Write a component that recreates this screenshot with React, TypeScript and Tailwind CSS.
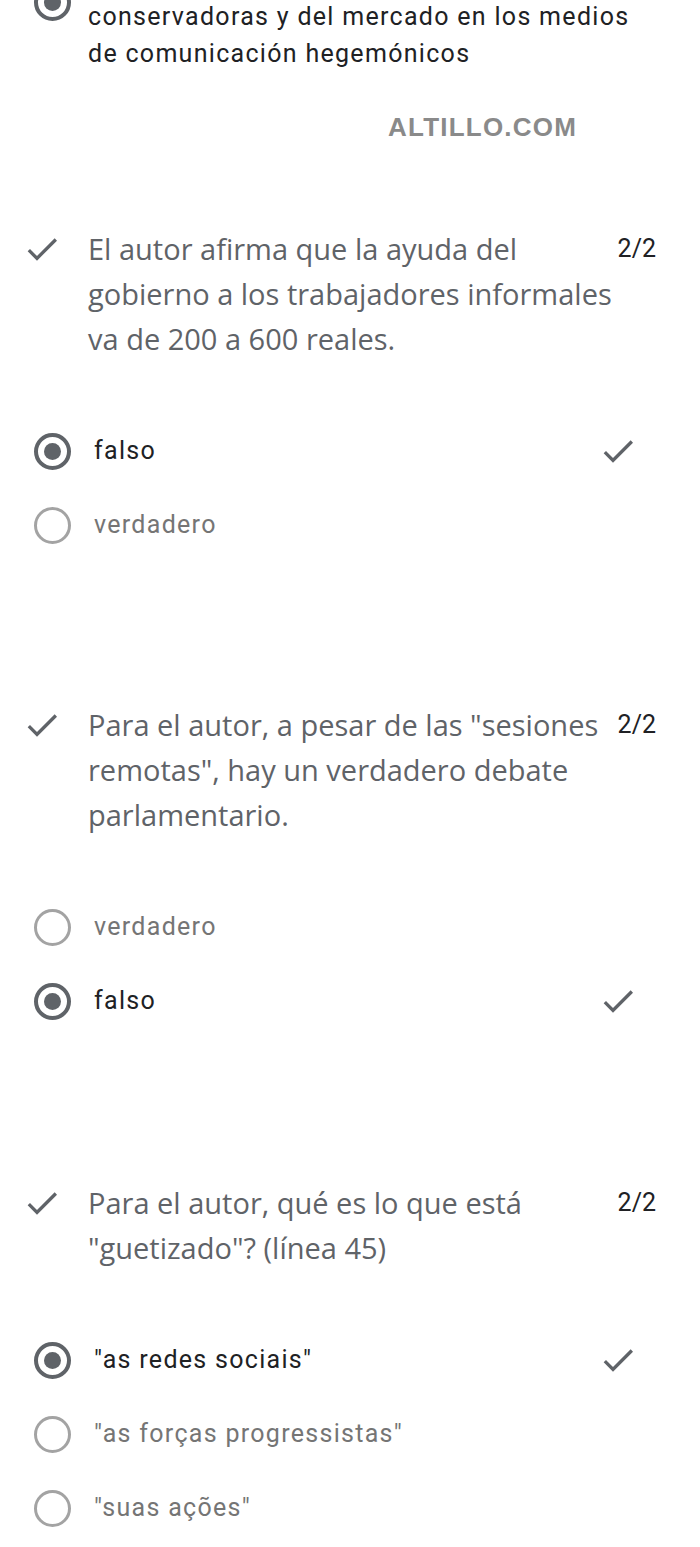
import React from 'react'

const titleFont = { fontFamily: '"Open Sans", "Noto Sans", sans-serif' }
const bodyFont = { fontFamily: 'Roboto, "Liberation Sans", sans-serif' }

// Material "done" check
function Check({ className = '' }: { className?: string }) {
  return (
    <svg viewBox="0 0 24 24" className={className} fill="currentColor">
      <path d="M9 16.2 4.8 12l-1.4 1.4L9 19 21 7l-1.4-1.4L9 16.2z" />
    </svg>
  )
}

function Radio({ checked }: { checked: boolean }) {
  return checked ? (
    <div className="w-[37px] h-[37px] rounded-full border-[4px] border-[#5f6368] flex items-center justify-center shrink-0">
      <div className="w-[17px] h-[17px] rounded-full bg-[#5f6368]" />
    </div>
  ) : (
    <div className="w-[37px] h-[37px] rounded-full border-[3px] border-[#a3a3a3] shrink-0" />
  )
}

type Opt = { label: string; checked?: boolean }

function Option({ label, checked = false }: Opt) {
  return (
    <div className="h-[74px] flex items-center pl-[34px] pr-[62px]">
      <Radio checked={checked} />
      <span
        style={bodyFont}
        className={`ml-[23px] flex-1 text-[25px] tracking-[1.3px] ${checked ? 'text-[#202124]' : 'text-[#757575]'}`}
      >
        {label}
      </span>
      {checked && <Check className="w-[40px] h-[40px] text-[#5f6368]" />}
    </div>
  )
}

function Question({ lines, options, className = '' }: { lines: string[]; options: Opt[]; className?: string }) {
  return (
    <section className={className}>
      <div className="flex pl-[22px] pr-[44px]">
        <Check className="w-[40px] h-[40px] text-[#5f6368] mt-[3px] shrink-0" />
        <div style={titleFont} className="ml-[26px] flex-1 text-[29px] leading-[45px] text-[#5f6368]">
          {lines.map((l, i) => (
            <div key={i} className="whitespace-nowrap">{l}</div>
          ))}
        </div>
        <div style={bodyFont} className="text-[25px] leading-[45px] text-[#202124]">2/2</div>
      </div>
      <div className="mt-[53px]">
        {options.map((o, i) => (
          <Option key={i} {...o} />
        ))}
      </div>
    </section>
  )
}

export default function App() {
  return (
    <div className="w-[700px] h-[1547px] bg-white overflow-hidden relative">
      {/* cut-off previous answer */}
      <div className="flex pl-[34px] -mt-[39px]">
        <div className="mt-[23px]">
          <Radio checked />
        </div>
        <div style={bodyFont} className="ml-[17px] text-[25px] leading-[37px] tracking-[1.3px] text-[#202124]">
          <div className="invisible">x</div>
          <div>conservadoras y del mercado en los medios</div>
          <div>de comunicación hegemónicos</div>
        </div>
      </div>

      <div className="flex justify-end pr-[123px] mt-[36px]">
        <span
          style={{ fontFamily: '"Liberation Sans", Arial, sans-serif' }}
          className="text-[26px] font-bold tracking-[1.2px] text-[#8a8a8a]"
        >
          ALTILLO.COM
        </span>
      </div>

      <div className="mt-[79px] flex flex-col">
        <Question
          lines={[
            'El autor afirma que la ayuda del',
            'gobierno a los trabajadores informales',
            'va de 200 a 600 reales.',
          ]}
          options={[{ label: 'falso', checked: true }, { label: 'verdadero' }]}
        />
        <Question
          className="mt-[140px]"
          lines={['Para el autor, a pesar de las "sesiones', 'remotas", hay un verdadero debate', 'parlamentario.']}
          options={[{ label: 'verdadero' }, { label: 'falso', checked: true }]}
        />
        <Question
          className="mt-[142px]"
          lines={['Para el autor, qué es lo que está', '"guetizado"? (línea 45)']}
          options={[
            { label: '"as redes sociais"', checked: true },
            { label: '"as forças progressistas"' },
            { label: '"suas ações"' },
          ]}
        />
      </div>
    </div>
  )
}
